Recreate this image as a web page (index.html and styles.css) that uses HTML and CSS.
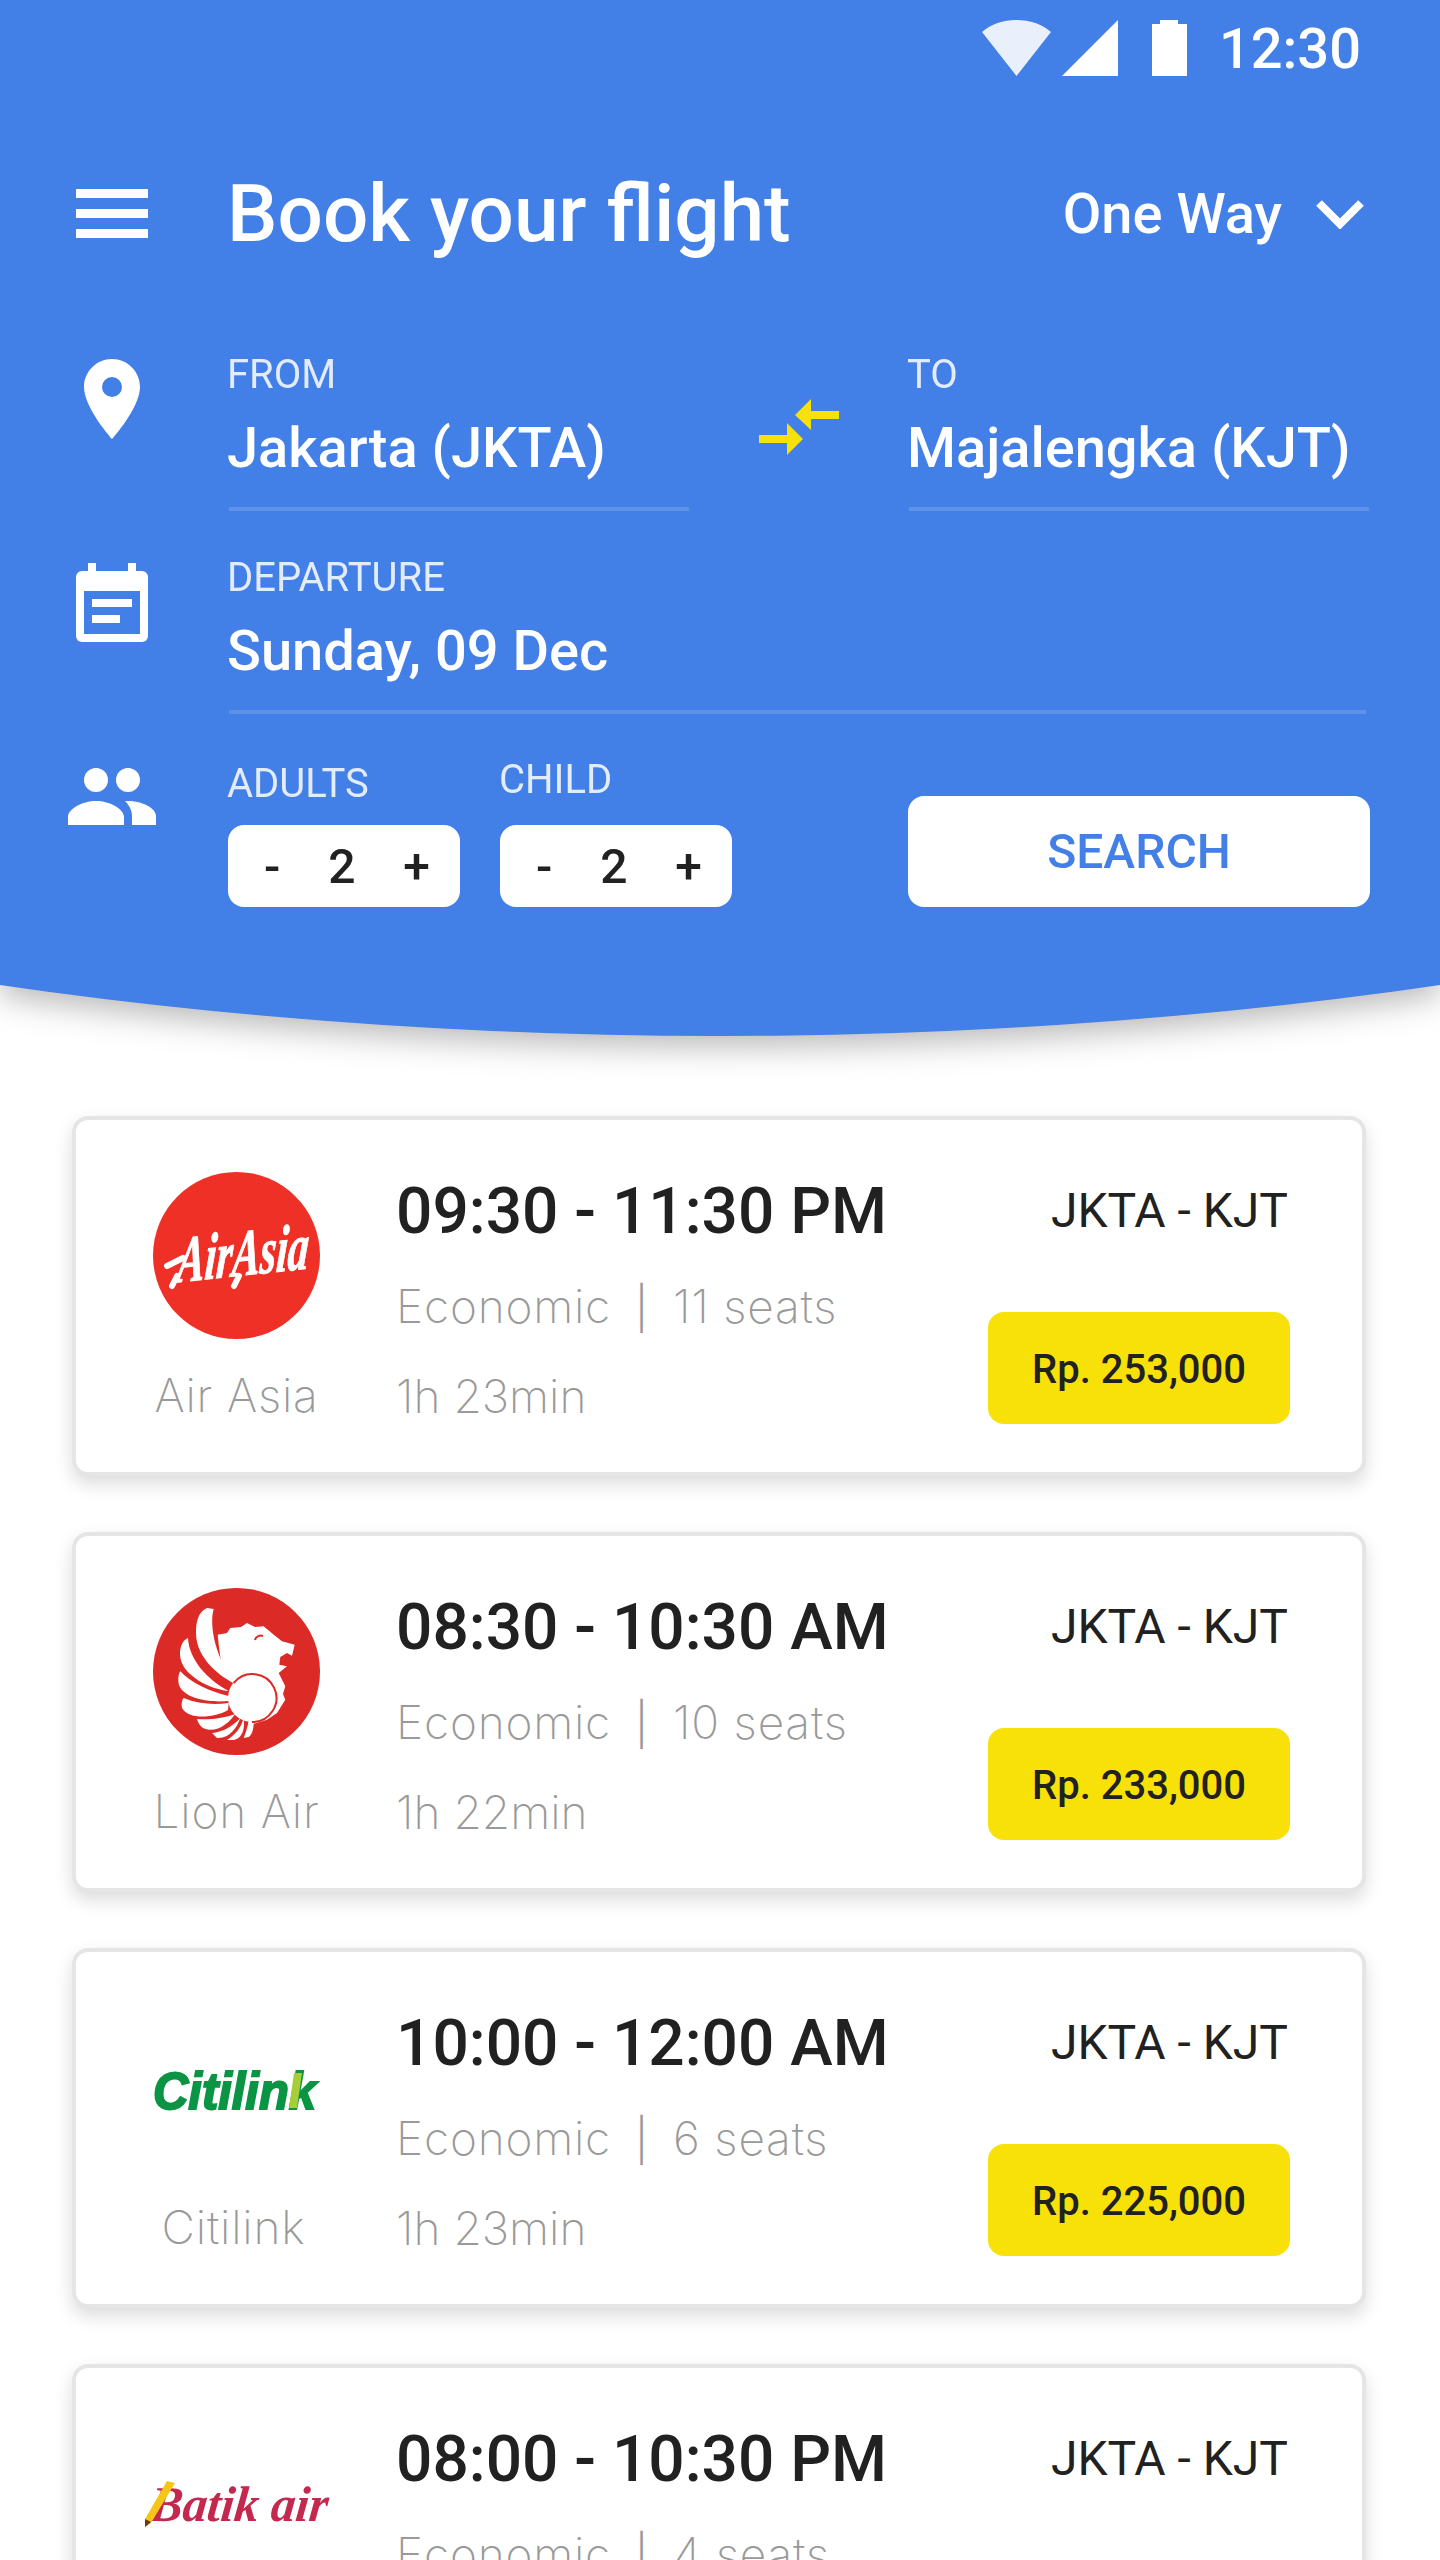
FILE: index.html
```html
<!DOCTYPE html>
<html lang="en">
  <head>
    <meta charset="UTF-8" />
    <meta name="viewport" content="width=device-width, initial-scale=1.0" />
    <title>Book your flight</title>
    <link rel="stylesheet" href="styles.css">
  </head>
  <body>
    <div class="header-wrap">
      <header class="header">
        <div class="status">
          <svg class="wifi" width="69" height="56" viewBox="0 0 69 56"><path d="M0 12C9 4 21 0 34.500 0S60 4 69 12L34.500 56z" /></svg>
          <svg class="signal" width="56" height="56" viewBox="0 0 56 56"><path d="M0 56L56 0V56z" /></svg>
          <svg class="battery" width="35" height="56" viewBox="0 0 35 56"><path d="M8 0H26V4H35V56H0V4H8z" /></svg>
          <span class="clock">12:30</span>
        </div>

        <div class="row title-row">
          <div class="icon-col">
            <svg width="72" height="50" viewBox="0 0 72 50"><path d="M0 0H72V9H0zM0 20H72V29H0zM0 40H72V49H0z" /></svg>
          </div>
          <h1>Book your flight</h1>
          <div class="trip-type">
            <span>One Way</span>
            <svg width="48" height="30" viewBox="0 0 48 30"><path class="chevron" d="M3 4L24 25L45 4" /></svg>
          </div>
        </div>

        <div class="row route-row">
          <div class="icon-col">
            <svg width="56" height="80" viewBox="0 0 56 80"><path fill-rule="evenodd" d="M28 0C12.500 0 0 12.500 0 28C0 49 28 80 28 80S56 49 56 28C56 12.500 43.500 0 28 0ZM28 18A10 10 0 1 1 28 38A10 10 0 1 1 28 18Z" /></svg>
          </div>
          <div class="field">
            <div class="label">FROM</div>
            <div class="value">Jakarta (JKTA)</div>
          </div>
          <div class="swap">
            <svg width="80" height="56" viewBox="0 0 80 56"><path class="yellow" d="M36 16L52 0V12H80V20H52V31z" /><path class="yellow" d="M0 36H28V24L44 40L28 56V44H0z" /></svg>
          </div>
          <div class="field">
            <div class="label">TO</div>
            <div class="value">Majalengka (KJT)</div>
          </div>
        </div>

        <div class="row date-row">
          <div class="icon-col">
            <svg width="72" height="80" viewBox="0 0 72 80"><path d="M12 0H20V10H12zM52 0H60V10H52z" /><rect y="8" width="72" height="71" rx="6" /><rect class="cut" x="8" y="28" width="56" height="43" /><path d="M16 36H56V44H16zM16 52H44V60H16z" /></svg>
          </div>
          <div class="field">
            <div class="label">DEPARTURE</div>
            <div class="value">Sunday, 09 Dec</div>
          </div>
        </div>

        <div class="row pax-row">
          <div class="icon-col pax-icon">
            <svg width="88" height="58" viewBox="0 0 88 58"><circle cx="28" cy="12" r="12" /><circle cx="60" cy="12" r="12" /><path d="M0 57V49C0 41 14 33 28 33S56 41 56 49V57zM64 57V48C64 42 61 37 57 33H60C74 33 88 40 88 48V57z" /></svg>
          </div>
          <div class="pax">
            <div class="label pax-label">ADULTS</div>
            <div class="stepper"><span>-</span><span>2</span><span>+</span></div>
          </div>
          <div class="pax">
            <div class="label pax-label pax-label-high">CHILD</div>
            <div class="stepper"><span>-</span><span>2</span><span>+</span></div>
          </div>
          <button class="search">SEARCH</button>
        </div>
      </header>
    </div>

    <main class="flights">
      <article class="card">
        <div class="airline">
          <div class="logo">
            <svg width="167" height="167" viewBox="0 0 167 167">
              <circle cx="83.500" cy="83.500" r="83.500" fill="#ef3026" />
              <g transform="rotate(-6 83 84)">
                <text class="airasia-mark" x="22" y="104" textLength="132" lengthAdjust="spacingAndGlyphs" transform="skewX(-10) translate(17 0)">AirAsia</text>
              </g>
              <path class="airasia-swash" d="M14 94L30 86M19 114L24 104M81 114L86 104" />
            </svg>
          </div>
          <div class="muted name">Air Asia</div>
        </div>
        <div class="details">
          <div class="time">09:30 - 11:30 PM</div>
          <div class="muted seats">Economic<span class="sep">|</span>11 seats</div>
          <div class="muted duration">1h 23min</div>
        </div>
        <div class="fare">
          <div class="route">JKTA - KJT</div>
          <div class="price">Rp. 253,000</div>
        </div>
      </article>

      <article class="card">
        <div class="airline">
          <div class="logo">
            <svg width="167" height="167" viewBox="0 0 167 167">
              <circle cx="83.500" cy="83.500" r="83.500" fill="#dc2a27" />
              <g fill="#fff">
                <path d="M60.700 21C57 34 59 62 80.700 95C70 90 43 72 43 45C43 34 45 24 54 20Z" />
                <path d="M35 50C36 72 55 92 75.700 103C60 102 27 88 27 66C27 58 30 52 35 50Z" />
                <path d="M27.300 83.300C38 95 58 104 75.700 108L75.700 113C55 115 25 110 25.300 92C25.300 88 26 85 27.300 83.300Z" />
                <path d="M30.700 110C45 116 60 117 75.700 115L75 122C62 130 35 132 29 120C28 116 29 112 30.700 110Z" />
                <path d="M44 131C58 132 72 130 82 126C76 136 62 146 50 140C47 138 45 135 44 131Z" />
                <path d="M59 145C70 144 80 138 87.300 130C84 140 76 151 64 150Z" />
                <path d="M74 152C82 147 88 140 90.700 130C92 140 90 150 80.700 152Z" />
                <path d="M90.700 150C93 144 95 138 95.700 132L100.700 132C101 138 100 146 95.700 149Z" />
                <path d="M64.700 46.700L65.700 56.700L69 81.700C71 88 75 92 80.700 95L100 136L114 131.700L124 125L132.300 111.700L130 106L132.300 98.300L125.700 85L134 78.300L126.300 76.700L127.300 69L134 65L139 67.700L141.700 56.700L129 53.300L120.700 46.700L110.700 38.300L102 39L94 35L88 39L77.300 40L74 45Z" />
                <circle cx="99" cy="110" r="24" />
              </g>
              <path d="M80.700 95A24 24 0 1 1 99 134" fill="none" stroke="#dc2a27" stroke-width="2" />
              <path d="M102 52C103 48 107 47 110 48" fill="none" stroke="#dc2a27" stroke-width="2" />
            </svg>
          </div>
          <div class="muted name">Lion Air</div>
        </div>
        <div class="details">
          <div class="time">08:30 - 10:30 AM</div>
          <div class="muted seats">Economic<span class="sep">|</span>10 seats</div>
          <div class="muted duration">1h 22min</div>
        </div>
        <div class="fare">
          <div class="route">JKTA - KJT</div>
          <div class="price">Rp. 233,000</div>
        </div>
      </article>

      <article class="card">
        <div class="airline">
          <div class="logo">
            <svg class="citilink-logo" width="167" height="40" viewBox="0 0 167 40">
              <text class="citilink-mark" x="0" y="38" textLength="163" lengthAdjust="spacingAndGlyphs">Citilink</text>
              <path d="M141 2H149L144 37H136z" fill="#a6ce39" />
            </svg>
          </div>
          <div class="muted name name-citilink">Citilink</div>
        </div>
        <div class="details">
          <div class="time">10:00 - 12:00 AM</div>
          <div class="muted seats">Economic<span class="sep">|</span>6 seats</div>
          <div class="muted duration">1h 23min</div>
        </div>
        <div class="fare">
          <div class="route">JKTA - KJT</div>
          <div class="price">Rp. 225,000</div>
        </div>
      </article>

      <article class="card">
        <div class="airline">
          <div class="logo">
            <svg class="batik-logo" width="183" height="46" viewBox="0 0 183 46">
              <text class="batik-mark" x="8" y="40" textLength="178" lengthAdjust="spacingAndGlyphs" transform="skewX(-6)">Batik air</text>
              <path d="M0 38L22 0L30 2L6 42L0 46z" fill="#f5c518" />
              <path d="M0 38L6 41L0 46z" fill="#6b3a12" />
            </svg>
          </div>
          <div class="muted name">Batik Air</div>
        </div>
        <div class="details">
          <div class="time">08:00 - 10:30 PM</div>
          <div class="muted seats">Economic<span class="sep">|</span>4 seats</div>
          <div class="muted duration">1h 30min</div>
        </div>
        <div class="fare">
          <div class="route">JKTA - KJT</div>
          <div class="price">Rp. 210,000</div>
        </div>
      </article>
    </main>
  </body>
</html>
```

FILE: styles.css
```css
html,
body {
  margin: 0;
  height: 2560px;
  overflow: hidden;
}

body {
  font-family: Roboto, 'Liberation Sans', sans-serif;
  background-color: white;
  color: #212121;
}

/* header: the curve is a clip, so the shadow goes on the wrapper */
.header-wrap {
  filter: drop-shadow(0 10px 16px rgba(0, 0, 0, 0.28));
}

.header {
  height: 1036px;
  box-sizing: border-box;
  background-color: #427fe6;
  color: white;
  clip-path: ellipse(2322px 1036px at 50% 0);
}

.header svg {
  display: block;
  fill: white;
  flex-shrink: 0;
}

.status {
  display: flex;
  align-items: center;
  justify-content: flex-end;
  height: 56px;
  padding: 20px 79px 0 0;
}

.header .wifi {
  fill: #e9f0fc;
}

.signal {
  margin-left: 11px;
}

.battery {
  margin-left: 34px;
}

.clock {
  margin-left: 32px;
  padding-top: 2px;
  font-size: 56px;
  line-height: 56px;
  font-weight: 500;
}

.row {
  display: flex;
}

.icon-col {
  width: 224px;
  margin-right: 5px;
  display: flex;
  justify-content: center;
  flex-shrink: 0;
}

.title-row {
  align-items: center;
  margin-top: 97px;
  padding-right: 76px;
}

h1 {
  flex: 1;
  margin: 0 0 0 -2px;
  font-size: 80px;
  line-height: 80px;
  font-weight: 500;
}

.trip-type {
  display: flex;
  align-items: center;
  gap: 34px;
  margin-top: 1px;
  font-size: 56px;
  line-height: 80px;
  font-weight: 500;
}

.header .chevron {
  fill: none;
  stroke: white;
  stroke-width: 8;
}

.route-row {
  margin-top: 101px;
}

.route-row .icon-col {
  padding-top: 4px;
}

.field {
  flex: 1;
  padding-bottom: 31px;
  border-bottom: 4px solid rgba(255, 255, 255, 0.15);
}

.route-row .field {
  flex: none;
  width: 460px;
}

.label {
  margin-left: -2px;
  font-size: 40px;
  line-height: 40px;
  color: rgba(255, 255, 255, 0.85);
}

.value {
  margin: 25px 0 0 -2px;
  font-size: 56px;
  line-height: 56px;
  font-weight: 500;
}

.swap {
  width: 220px;
  padding-top: 44px;
  display: flex;
  justify-content: center;
}

.header .yellow {
  fill: #f8e108;
}

.date-row {
  margin-top: 47px;
  padding-right: 74px;
}

.date-row .icon-col {
  padding-top: 5px;
}

.header .cut {
  fill: #427fe6;
}

.pax-row {
  align-items: flex-end;
  margin-top: 46px;
  padding-right: 70px;
}

.pax-icon {
  align-self: flex-start;
  margin-right: 4px;
  padding-top: 8px;
}

.pax {
  margin-right: 40px;
}

.pax-label {
  margin-bottom: 21px;
  margin-left: -1px;
}

.pax-label-high {
  margin-bottom: 25px;
}

.stepper {
  display: flex;
  justify-content: space-between;
  align-items: center;
  width: 232px;
  height: 82px;
  box-sizing: border-box;
  padding: 0 30px 0 36px;
  background: white;
  border-radius: 16px;
  color: #212121;
  font-size: 48px;
  font-weight: 500;
}

.search {
  margin-left: auto;
  width: 462px;
  height: 111px;
  background: white;
  border: none;
  border-radius: 16px;
  color: #427fe6;
  font-family: inherit;
  font-size: 48px;
  font-weight: 500;
}

/* flight list */
.flights {
  display: flex;
  flex-direction: column;
  gap: 56px;
  padding: 80px 74px 0 72px;
}

.card {
  display: flex;
  flex-shrink: 0;
  height: 360px;
  box-sizing: border-box;
  padding: 52px 72px 0 77px;
  background: white;
  border: 4px solid #e5e5e5;
  border-radius: 16px;
  box-shadow: 0 8px 18px rgba(0, 0, 0, 0.14);
}

.airline {
  width: 167px;
  margin-right: 76px;
  text-align: center;
  flex-shrink: 0;
}

.logo {
  display: flex;
  align-items: center;
  justify-content: center;
  height: 167px;
  margin-bottom: 24px;
}

.logo svg {
  display: block;
  flex-shrink: 0;
  overflow: visible;
}

.citilink-logo {
  margin-top: 7px;
}

.airasia-mark {
  fill: white;
  stroke: white;
  stroke-width: 1;
  font-family: 'Liberation Serif', serif;
  font-style: italic;
  font-weight: 700;
  font-size: 66px;
}

.airasia-swash {
  fill: none;
  stroke: white;
  stroke-width: 6;
  stroke-linecap: round;
}

.citilink-mark {
  fill: #0a9444;
  stroke: #0a9444;
  stroke-width: 2;
  font-family: 'Liberation Sans', sans-serif;
  font-style: italic;
  font-weight: 700;
  font-size: 52px;
}

.batik-mark {
  fill: #c4284f;
  font-family: 'Liberation Serif', serif;
  font-style: italic;
  font-weight: 700;
  font-size: 50px;
}

.muted {
  font-family: Inter, 'Liberation Sans', sans-serif;
  font-size: 46px;
  font-weight: 200;
  line-height: 64px;
  color: #999;
  white-space: nowrap;
}

.name {
  letter-spacing: 0.8px;
}

.name-citilink {
  margin-right: 6px;
}

.details {
  flex: 1;
  padding-top: 8px;
}

.time {
  font-size: 64px;
  line-height: 64px;
  font-weight: 500;
  white-space: nowrap;
}

.seats {
  margin-top: 30px;
  letter-spacing: 0.8px;
}

.sep {
  margin: 0 24px;
  font-size: 42px;
  font-weight: 300;
}

.duration {
  margin-top: 24px;
}

.fare {
  display: flex;
  flex-direction: column;
  align-items: flex-end;
  padding-top: 7px;
}

.route {
  margin-right: 2px;
  font-size: 48px;
  line-height: 64px;
}

.price {
  display: flex;
  align-items: center;
  justify-content: center;
  width: 302px;
  height: 112px;
  box-sizing: border-box;
  padding-top: 2px;
  margin-top: 69px;
  background-color: #f8e108;
  border-radius: 16px;
  font-size: 40px;
  font-weight: 500;
}
```
